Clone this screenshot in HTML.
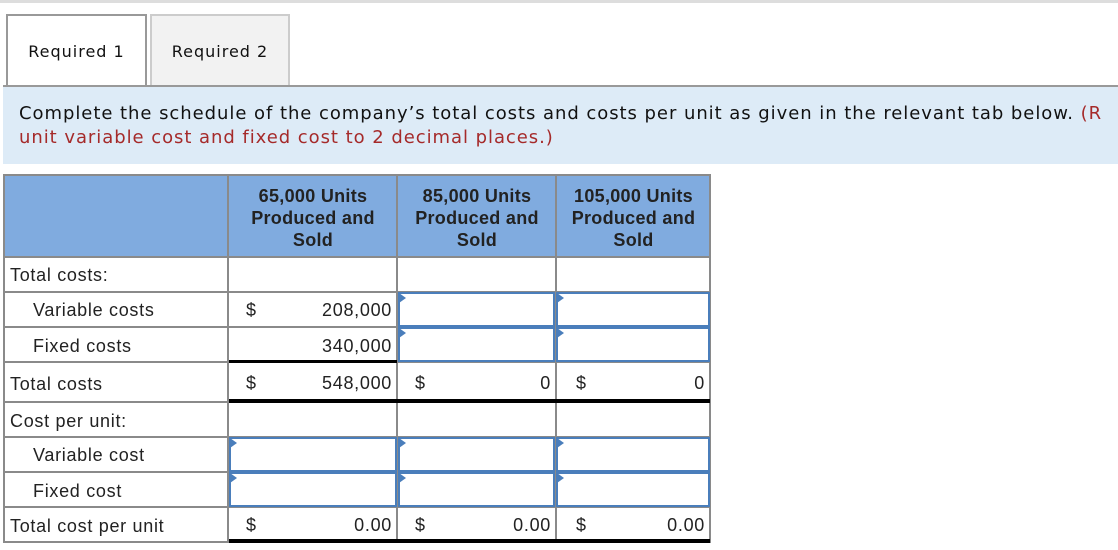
<!DOCTYPE html>
<html><head><meta charset="utf-8"><style>
*{margin:0;padding:0;box-sizing:border-box}
body{width:1118px;height:550px;background:#fff;position:relative;overflow:hidden;font-family:"Liberation Sans",Arial,sans-serif}
.a{position:absolute}
.tab{position:absolute;top:14px;height:73px;font-family:"DejaVu Sans",Verdana,sans-serif;font-size:16px;letter-spacing:1px;color:#111;text-align:center;line-height:72px}
.instr{font-family:"DejaVu Sans",Verdana,sans-serif;font-size:18px;letter-spacing:0.95px;line-height:24px;white-space:nowrap}
.cell{position:absolute;font-size:18px;letter-spacing:0.7px;color:#222;line-height:20px;white-space:nowrap}
.vl{position:absolute;width:2px;background:#8a8a8a}
.hl{position:absolute;height:2px;background:#8a8a8a}
.inp{position:absolute;border:2px solid #4a7ebb;background:#fff}
.inp:before{content:"";position:absolute;left:-1px;top:-1px;border-left:7px solid #4a7ebb;border-top:5px solid transparent;border-bottom:5px solid transparent}
.bk{position:absolute;height:3px;background:#000}
</style></head><body>
<div class="a" style="left:0;top:0;width:1118px;height:3px;background:#ddd"></div>
<div class="tab" style="left:6px;width:141px;border:2px solid #999;border-bottom:none;background:#fff">Required 1</div>
<div class="tab" style="left:150px;width:140px;border:2px solid #ccc;border-bottom:none;background:#f2f2f2">Required 2</div>
<div class="a" style="left:3px;top:85px;width:1115px;height:2px;background:#999"></div>
<div class="a" style="left:3px;top:87px;width:1115px;height:77px;background:#ddebf7"></div>
<div class="a instr" style="left:19px;top:102px;color:#111">Complete the schedule of the company’s total costs and costs per unit as given in the relevant tab below. <span style="color:#a52a2a">(R</span></div>
<div class="a instr" style="left:19px;top:126px;color:#a52a2a">unit variable cost and fixed cost to 2 decimal places.)</div>

<div class="a" style="left:3px;top:174px;width:708px;height:83px;background:#80abdf"></div>
<div class="a" style="left:3px;top:174px;width:708px;height:2px;background:#8a8a8a"></div>
<div class="hl" style="left:3px;top:256px;width:708px"></div>
<div class="vl" style="left:3px;top:174px;height:369px"></div>
<div class="vl" style="left:227px;top:174px;height:369px"></div>
<div class="vl" style="left:396px;top:174px;height:369px"></div>
<div class="vl" style="left:555px;top:174px;height:369px"></div>
<div class="vl" style="left:709px;top:174px;height:369px"></div>
<div class="hl" style="left:3px;top:291px;width:708px"></div>
<div class="hl" style="left:3px;top:326px;width:708px"></div>
<div class="hl" style="left:3px;top:361px;width:708px"></div>
<div class="hl" style="left:3px;top:401px;width:708px"></div>
<div class="hl" style="left:3px;top:436px;width:708px"></div>
<div class="hl" style="left:3px;top:471px;width:708px"></div>
<div class="hl" style="left:3px;top:506px;width:708px"></div>
<div class="hl" style="left:3px;top:541px;width:226px"></div>

<div class="cell" style="left:229px;top:185px;width:168px;text-align:center;font-weight:bold;line-height:22px;letter-spacing:0.3px">65,000 Units<br>Produced and<br>Sold</div>
<div class="cell" style="left:398px;top:185px;width:158px;text-align:center;font-weight:bold;line-height:22px;letter-spacing:0.3px">85,000 Units<br>Produced and<br>Sold</div>
<div class="cell" style="left:557px;top:185px;width:153px;text-align:center;font-weight:bold;line-height:22px;letter-spacing:0.3px">105,000 Units<br>Produced and<br>Sold</div>

<div class="cell" style="left:10px;top:265px">Total costs:</div>
<div class="cell" style="left:33px;top:300px">Variable costs</div>
<div class="cell" style="left:33px;top:336px">Fixed costs</div>
<div class="cell" style="left:10px;top:374px">Total costs</div>
<div class="cell" style="left:10px;top:411px">Cost per unit:</div>
<div class="cell" style="left:33px;top:445px">Variable cost</div>
<div class="cell" style="left:33px;top:481px">Fixed cost</div>
<div class="cell" style="left:10px;top:516px">Total cost per unit</div>

<div class="cell" style="left:246px;top:300px">$</div>
<div class="cell" style="left:290px;top:300px;width:102px;text-align:right">208,000</div>
<div class="cell" style="left:290px;top:336px;width:102px;text-align:right">340,000</div>
<div class="bk" style="left:229px;top:360px;width:168px"></div>
<div class="cell" style="left:246px;top:373px">$</div>
<div class="cell" style="left:290px;top:373px;width:102px;text-align:right">548,000</div>
<div class="cell" style="left:415px;top:373px">$</div>
<div class="cell" style="left:460px;top:373px;width:91px;text-align:right">0</div>
<div class="cell" style="left:576px;top:373px">$</div>
<div class="cell" style="left:610px;top:373px;width:95px;text-align:right">0</div>
<div class="bk" style="left:229px;top:399px;width:481px;height:4px"></div>

<div class="inp" style="left:398px;top:292px;width:157px;height:35px"></div>
<div class="inp" style="left:556px;top:292px;width:154px;height:35px"></div>
<div class="inp" style="left:398px;top:327px;width:157px;height:35px"></div>
<div class="inp" style="left:556px;top:327px;width:154px;height:35px"></div>
<div class="inp" style="left:229px;top:437px;width:168px;height:35px"></div>
<div class="inp" style="left:398px;top:437px;width:157px;height:35px"></div>
<div class="inp" style="left:556px;top:437px;width:154px;height:35px"></div>
<div class="inp" style="left:229px;top:472px;width:168px;height:35px"></div>
<div class="inp" style="left:398px;top:472px;width:157px;height:35px"></div>
<div class="inp" style="left:556px;top:472px;width:154px;height:35px"></div>

<div class="cell" style="left:246px;top:515px">$</div>
<div class="cell" style="left:290px;top:515px;width:102px;text-align:right">0.00</div>
<div class="cell" style="left:415px;top:515px">$</div>
<div class="cell" style="left:450px;top:515px;width:101px;text-align:right">0.00</div>
<div class="cell" style="left:576px;top:515px">$</div>
<div class="cell" style="left:610px;top:515px;width:95px;text-align:right">0.00</div>
<div class="bk" style="left:229px;top:539px;width:481px;height:4px"></div>
</body></html>
